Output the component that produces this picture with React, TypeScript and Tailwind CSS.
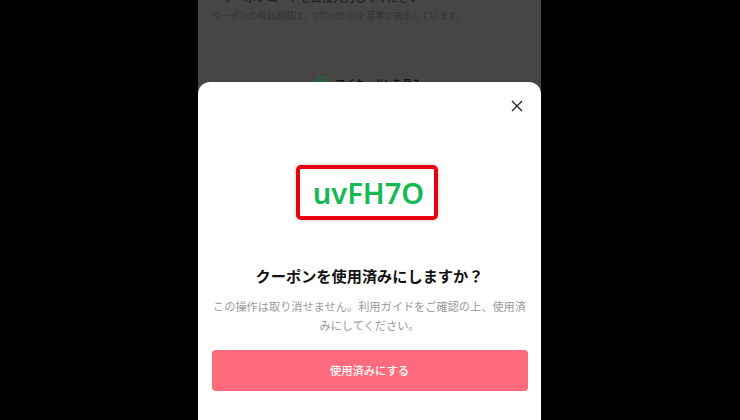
export default function App() {
  return (
    <div
      className="flex h-[420px] w-[740px] justify-center overflow-hidden bg-black pr-[1px]"
      style={{ fontFamily: '"Noto Sans CJK JP", "Liberation Sans", sans-serif' }}
    >
      <div className="relative h-[420px] w-[343px] overflow-hidden bg-[#464646]">
        <div className="px-[14px] blur-[0.5px]">
          <p className="mt-[-11px] text-[11px] leading-[16px] font-medium whitespace-nowrap text-[#222]">
            ・クーポンコードを直接入力してください
          </p>
          <p className="mt-[3px] text-[9.1px] leading-[14px] whitespace-nowrap text-[#333]">
            クーポンの有効期間は、UTC+09:00を基準に表示しています。
          </p>
          <div className="mt-[41px] flex h-[60px] items-start justify-center gap-[8px] rounded border border-[#494949] pt-[11px]">
            <svg width="10" height="12" viewBox="0 0 10 12" className="mt-[1px]">
              <rect x="0.75" y="1" width="8.5" height="10" rx="2" fill="none" stroke="#1f6b3a" strokeWidth="1.5" />
              <path d="M1 5h8" stroke="#1f6b3a" strokeWidth="1.5" />
            </svg>
            <span className="text-[9.6px] leading-[16px] font-bold text-[#111]">マイクーポンを見る</span>
          </div>
        </div>

        <div className="absolute inset-x-0 top-[82px] bottom-0 rounded-t-[12px] bg-white">
          <div className="flex justify-end pt-[18px] pr-[18px]">
            <svg width="12" height="12" viewBox="0 0 12 12" fill="none" stroke="#222" strokeWidth="1.3">
              <path d="M1 1l10 10M11 1L1 11" />
            </svg>
          </div>
          <div className="mt-[53px] flex justify-center pr-[5px]">
            <div className="flex h-[55px] w-[142px] items-center justify-center rounded-[5px] border-[4px] border-[#e60012] pl-[3px] shadow-[0_0_4px_rgba(0,0,0,0.25)]">
              <span
                className="text-[29px] leading-none font-semibold text-[#14b954]"
                style={{ fontFamily: '"Noto Sans", sans-serif' }}
              >
                uvFH7O
              </span>
            </div>
          </div>
          <h1 className="mt-[44px] text-center text-[15.2px] leading-[22px] font-bold text-[#111]">
            クーポンを使用済みにしますか？
          </h1>
          <p className="mx-auto mt-[11px] w-[318px] text-center text-[11.2px] leading-[19px] text-[#9a9a9a]">
            この操作は取り消せません。利用ガイドをご確認の上、使用済みにしてください。
          </p>
          <button className="mx-auto mt-[15px] block h-[41px] w-[316px] rounded-[4px] bg-[#ff6b7d] text-[11.3px] font-medium text-white">
            使用済みにする
          </button>
        </div>
      </div>
    </div>
  );
}
